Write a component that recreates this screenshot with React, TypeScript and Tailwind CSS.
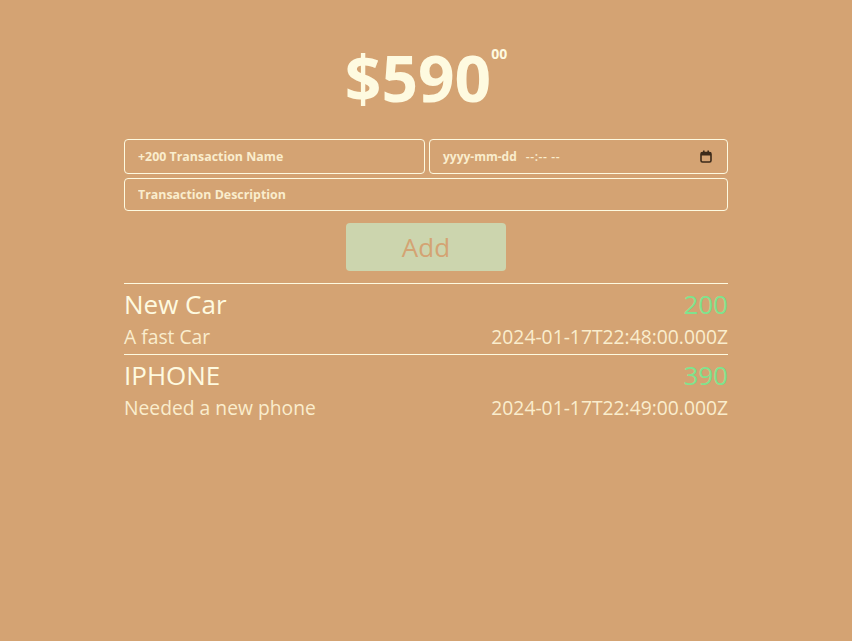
import React from "react";

const transactions = [
    { name: "New Car", price: 200, description: "A fast Car", datetime: "2024-01-17T22:48:00.000Z" },
    { name: "IPHONE", price: 390, description: "Needed a new phone", datetime: "2024-01-17T22:49:00.000Z" },
];

const App = () => {
    return (
        <div className="min-h-[641px] bg-[#d4a373] font-['Open_Sans',sans-serif] text-[#fefae0]">
            <main className="mx-auto w-[604px] pt-[38px]">
                <h1 className="flex justify-center text-[64px] leading-[80px] font-bold">
                    $590
                    <span className="mt-[6px] text-[14px] leading-[20px]">00</span>
                </h1>

                <form className="mt-[21px]" onSubmit={(e) => e.preventDefault()}>
                    <div className="flex gap-[4px]">
                        <input
                            type="text"
                            placeholder="+200 Transaction Name"
                            className="h-[35px] w-[301px] rounded-[4px] border border-[#fefae0] bg-transparent px-[13px] text-[12.4px] font-bold text-[#faedcd] placeholder:text-[#faedcd] outline-none"
                        />
                        <div className="flex h-[35px] flex-1 items-center justify-between rounded-[4px] border border-[#fefae0] px-[13px] text-[12px] font-bold text-[#faedcd]">
                            <span>
                                yyyy-mm-dd<span className="ml-[9px] font-semibold tracking-[0.6px]">--:-- --</span>
                            </span>
                            <svg width="12" height="13" viewBox="0 0 12 13" className="mr-[2px]">
                                <rect x="1" y="2.5" width="10" height="9.5" rx="1.5" fill="none" stroke="#3b2a1a" strokeWidth="1.6" />
                                <rect x="1" y="2.5" width="10" height="3" fill="#3b2a1a" />
                                <rect x="3" y="0.5" width="1.6" height="2.5" fill="#3b2a1a" />
                                <rect x="7.4" y="0.5" width="1.6" height="2.5" fill="#3b2a1a" />
                            </svg>
                        </div>
                    </div>
                    <input
                        type="text"
                        placeholder="Transaction Description"
                        className="mt-[4px] block h-[33px] w-full rounded-[4px] border border-[#fefae0] bg-transparent px-[13px] text-[12.4px] font-bold text-[#faedcd] placeholder:text-[#faedcd] outline-none"
                    />
                    <div className="mt-[12px] flex justify-center">
                        <button
                            type="submit"
                            className="h-[48px] w-[160px] rounded-[4px] bg-[#ccd5ae] text-[26px] text-[#d4a373]"
                        >
                            Add
                        </button>
                    </div>
                </form>

                <div className="mt-[12px]">
                    {transactions.map((t) => (
                        <div key={t.name} className="border-t border-[#fefae0] pt-[4px] pb-[3px]">
                            <div className="flex justify-between text-[26px] leading-[32px]">
                                <span>{t.name}</span>
                                <span className="text-[#80e38e]">{t.price}</span>
                            </div>
                            <div className="mt-[3px] flex justify-between text-[19.3px] leading-[28px] text-[#faedcd]">
                                <span>{t.description}</span>
                                <span>{t.datetime}</span>
                            </div>
                        </div>
                    ))}
                </div>
            </main>
        </div>
    );
};

export default App;
